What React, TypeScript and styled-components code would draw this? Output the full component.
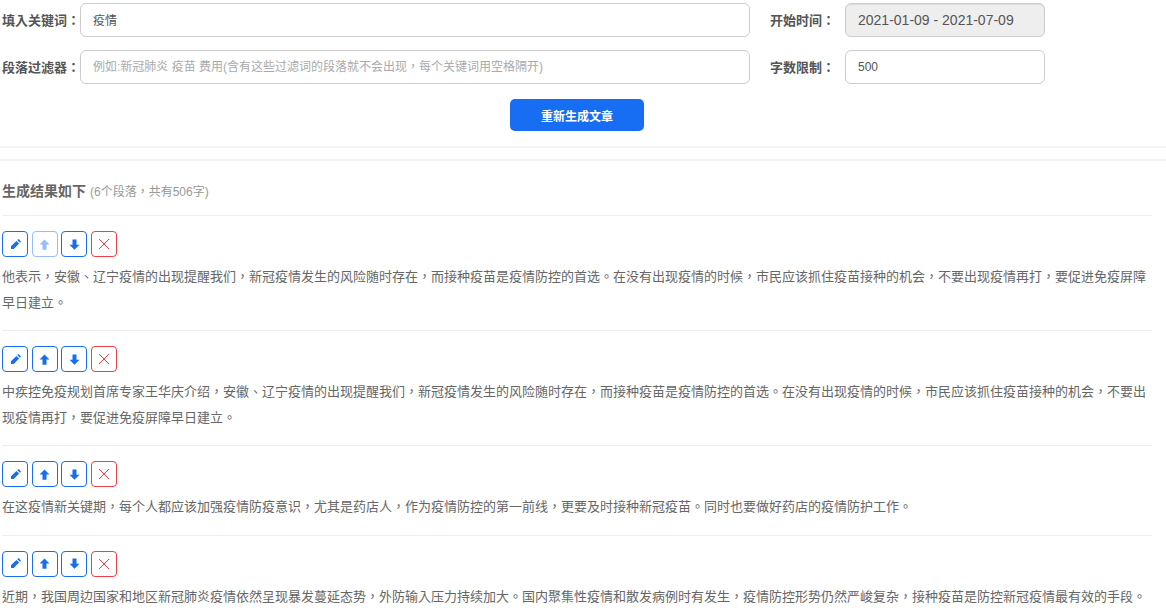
import React from 'react'
import styled, { createGlobalStyle } from 'styled-components'

// TC centres the full-width comma and colon, as the original's font does
const FONT = '"Liberation Sans", "Noto Sans CJK TC", sans-serif'

const GlobalStyle = createGlobalStyle`
  html, body {
    margin: 0;
    height: 100%;
    overflow: hidden;
    background: #fff;
  }
  body {
    font-family: ${FONT};
    font-size: 13px;
    color: #666;
  }
  * {
    box-sizing: border-box;
  }
`

const Page = styled.div`
  width: 1166px;
  height: 612px;
  overflow: hidden;
  padding: 3px 14px 0 2px;
`

const FormRow = styled.div`
  display: flex;
  align-items: center;
  width: 1150px;
  height: 34px;
  margin-bottom: 13px;
`

const FieldLabel = styled.label<{ $wide?: boolean }>`
  flex: none;
  width: ${({ $wide }) => ($wide ? 78 : 75)}px;
  margin-left: ${({ $wide }) => ($wide ? 0 : 20)}px;
  padding-bottom: 2px;
  font-size: 13px;
  font-weight: 700;
  color: #555;
  white-space: nowrap;
`

const TextInput = styled.input<{ $wide?: boolean }>`
  flex: none;
  width: ${({ $wide }) => ($wide ? 670 : 200)}px;
  height: 34px;
  padding: 0 12px 1px;
  border: 1px solid #ccc;
  border-radius: 6px;
  background: #fff;
  color: #555;
  font-family: ${FONT};
  font-size: 12px;
  outline: none;

  &::placeholder {
    color: #aaa;
    opacity: 1;
  }

  &:read-only {
    padding-bottom: 0;
    background: #eee;
    box-shadow: inset 0 1px 1px rgba(0, 0, 0, 0.075);
    font-size: 14px;
  }
`

const SubmitRow = styled.div`
  display: flex;
  justify-content: center;
  width: 1150px;
  margin-top: 15px;
  margin-bottom: 15px;
`

const SubmitButton = styled.button`
  width: 134px;
  height: 32px;
  border: none;
  border-radius: 5px;
  background: #176ef2;
  color: #fff;
  font-family: ${FONT};
  font-size: 12px;
  font-weight: 700;
`

const Rule = styled.hr<{ $last?: boolean }>`
  width: 1166px;
  height: 2px;
  margin: 0 0 ${({ $last }) => ($last ? 0 : 11)}px -2px;
  border: none;
  background: #f3f3f3;
`

const ResultHeader = styled.div`
  display: flex;
  align-items: baseline;
  gap: 4px;
  width: 1150px;
  height: 55px;
  padding-top: 21px;
  border-bottom: 1px solid #eee;
  line-height: 18px;
`

const ResultTitle = styled.span`
  font-size: 14px;
  font-weight: 700;
  color: #666;
`

const ResultCount = styled.span`
  font-size: 12px;
  color: #999;
`

const Block = styled.section`
  width: 1150px;
  padding-top: 15px;
  padding-bottom: 15px;
  border-bottom: 1px solid #eee;
`

const Actions = styled.div`
  display: flex;
  gap: 3.5px;
  margin-bottom: 7px;
`

const ActionButton = styled.button<{ $danger?: boolean; $disabled?: boolean }>`
  display: flex;
  align-items: center;
  justify-content: center;
  width: 26px;
  height: 26px;
  padding: 0;
  border: 1px solid ${({ $danger }) => ($danger ? '#ee3f4d' : '#176ef2')};
  border-radius: 4px;
  background: #fff;
  color: ${({ $danger }) => ($danger ? '#ee3f4d' : '#176ef2')};
  opacity: ${({ $disabled }) => ($disabled ? 0.45 : 1)};
`

const Paragraph = styled.p`
  margin: 0;
  font-size: 13px;
  line-height: 25.5px;
  color: #666;
`

const PencilIcon = () => (
  <svg width="11" height="11" viewBox="0 0 11 11" fill="currentColor">
    <path d="M6.4 1.9 9.1 4.6 3.7 10H1V7.3Z" />
    <path d="M7.2 1.1 7.8.5C8.2.1 8.7.1 9.1.5L10.5 1.9C10.9 2.3 10.9 2.8 10.5 3.2L9.9 3.8Z" />
  </svg>
)

const ArrowUpIcon = () => (
  <svg width="11" height="11" viewBox="0 0 11 11" fill="currentColor">
    <path d="M5.5.5 10.5 5.5H7.5V10.8H3.5V5.5H.5Z" />
  </svg>
)

const ArrowDownIcon = () => (
  <svg width="11" height="11" viewBox="0 0 11 11" fill="currentColor">
    <path d="M5.5 10.8 .5 5.8H3.5V.5H7.5V5.8H10.5Z" />
  </svg>
)

const CloseIcon = () => (
  <svg width="14" height="14" viewBox="0 0 14 14" fill="none" stroke="currentColor" strokeWidth="1">
    <path d="M2 2 12 12M12 2 2 12" />
  </svg>
)

const paragraphs = [
  '他表示，安徽、辽宁疫情的出现提醒我们，新冠疫情发生的风险随时存在，而接种疫苗是疫情防控的首选。在没有出现疫情的时候，市民应该抓住疫苗接种的机会，不要出现疫情再打，要促进免疫屏障早日建立。',
  '中疾控免疫规划首席专家王华庆介绍，安徽、辽宁疫情的出现提醒我们，新冠疫情发生的风险随时存在，而接种疫苗是疫情防控的首选。在没有出现疫情的时候，市民应该抓住疫苗接种的机会，不要出现疫情再打，要促进免疫屏障早日建立。',
  '在这疫情新关键期，每个人都应该加强疫情防疫意识，尤其是药店人，作为疫情防控的第一前线，更要及时接种新冠疫苗。同时也要做好药店的疫情防护工作。',
  '近期，我国周边国家和地区新冠肺炎疫情依然呈现暴发蔓延态势，外防输入压力持续加大。国内聚集性疫情和散发病例时有发生，疫情防控形势仍然严峻复杂，接种疫苗是防控新冠疫情最有效的手段。',
]

export default function App() {
  return (
    <Page>
      <GlobalStyle />
      <FormRow>
        <FieldLabel $wide>填入关键词：</FieldLabel>
        <TextInput $wide defaultValue="疫情" />
        <FieldLabel>开始时间：</FieldLabel>
        <TextInput readOnly defaultValue="2021-01-09 - 2021-07-09" />
      </FormRow>
      <FormRow>
        <FieldLabel $wide>段落过滤器：</FieldLabel>
        <TextInput $wide placeholder="例如:新冠肺炎 疫苗 费用(含有这些过滤词的段落就不会出现，每个关键词用空格隔开)" />
        <FieldLabel>字数限制：</FieldLabel>
        <TextInput defaultValue="500" />
      </FormRow>
      <SubmitRow>
        <SubmitButton>重新生成文章</SubmitButton>
      </SubmitRow>
      <Rule />
      <Rule $last />
      <ResultHeader>
        <ResultTitle>生成结果如下</ResultTitle>
        <ResultCount>(6个段落，共有506字)</ResultCount>
      </ResultHeader>
      {paragraphs.map((text, i) => (
        <Block key={i}>
          <Actions>
            <ActionButton><PencilIcon /></ActionButton>
            <ActionButton $disabled={i === 0}><ArrowUpIcon /></ActionButton>
            <ActionButton><ArrowDownIcon /></ActionButton>
            <ActionButton $danger><CloseIcon /></ActionButton>
          </Actions>
          <Paragraph>{text}</Paragraph>
        </Block>
      ))}
    </Page>
  )
}
